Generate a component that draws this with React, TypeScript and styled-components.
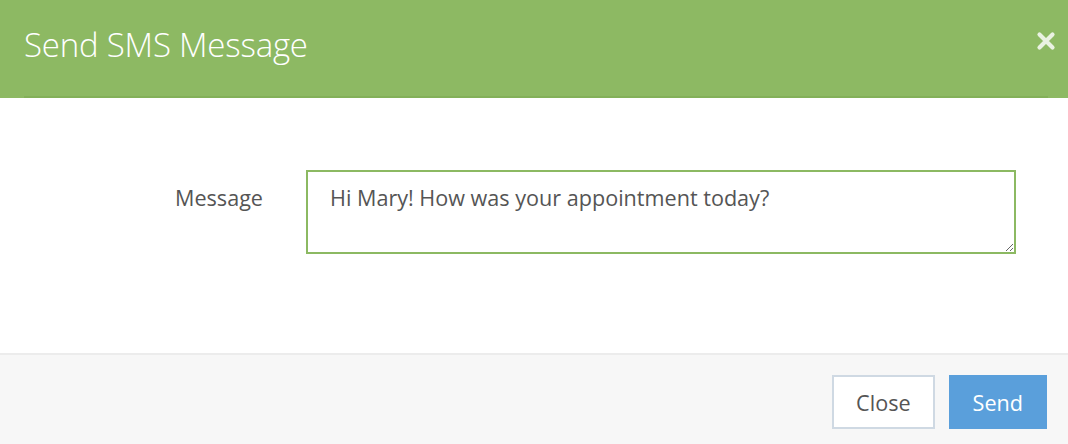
import React, { useEffect, useRef, useState, ChangeEvent } from "react";
import styled, { createGlobalStyle } from "styled-components";

const GlobalStyle = createGlobalStyle`
  html, body {
    margin: 0;
    padding: 0;
    background: #ffffff;
  }
  body {
    font-family: "Open Sans", "Liberation Sans", sans-serif;
    color: #555555;
  }
`;

const Modal = styled.section`
  width: 1068px;
  height: 444px;
  display: flex;
  flex-direction: column;
  background: #ffffff;
`;

const Header = styled.header`
  background: #8db963;
  padding: 0 20px 0 24px;
  height: 98px;
  display: flex;
  box-sizing: border-box;
`;

const HeaderInner = styled.div`
  flex: 1;
  display: flex;
  align-items: center;
  justify-content: space-between;
  border-bottom: 2px solid #83b059;
`;

const Title = styled.h4`
  margin: 0 0 8px;
  font-family: "Open Sans", sans-serif;
  font-weight: 300;
  font-size: 33px;
  color: #ffffff;
  letter-spacing: -0.2px;
`;

const CloseX = styled.button`
  border: none;
  background: none;
  padding: 0;
  margin: 0 -8px 14px 0;
  width: 20px;
  height: 20px;
  cursor: pointer;
  display: flex;
  align-items: center;
  justify-content: center;
`;

const Body = styled.div`
  flex: 1;
  padding: 72px 52px 0 0;
`;

const FormRow = styled.div`
  display: grid;
  grid-template-columns: 263px 1fr;
  column-gap: 43px;
  align-items: start;
`;

const Label = styled.label`
  text-align: right;
  font-size: 21.6px;
  line-height: 28px;
  padding-top: 14px;
  color: #555555;
`;

const MessageInput = styled.textarea`
  box-sizing: border-box;
  height: 84px;
  border: 2px solid #8cb962;
  border-radius: 0;
  padding: 12px 22px 10px;
  font-family: "Open Sans", sans-serif;
  font-size: 21.6px;
  line-height: 28px;
  color: #555555;
  caret-color: #333333;
  outline: none;
  resize: vertical;
`;

const Footer = styled.footer`
  border-top: 2px solid #ececec;
  background: #f7f7f7;
  height: 91px;
  box-sizing: border-box;
  padding: 20px 21px 0 0;
  display: flex;
  justify-content: flex-end;
  align-items: flex-start;
  gap: 14px;
`;

const Button = styled.button<{ $primary?: boolean }>`
  height: 54px;
  box-sizing: border-box;
  padding: 0 22px;
  font-family: "Open Sans", sans-serif;
  font-size: 21.6px;
  border-radius: 0;
  cursor: pointer;
  border: 2px solid ${(p) => (p.$primary ? "#5a9fdb" : "#cfd9e3")};
  background: ${(p) => (p.$primary ? "#5a9fdb" : "#ffffff")};
  color: ${(p) => (p.$primary ? "#ffffff" : "#555555")};
`;

export const App = () => {
  const [message, setMessage] = useState<string>(
    "Hi Mary! How was your appointment today?"
  );
  const inputRef = useRef<HTMLTextAreaElement>(null);

  useEffect(() => {
    const el = inputRef.current;
    if (el) {
      el.focus();
      el.setSelectionRange(el.value.length, el.value.length);
    }
  }, []);

  return (
    <Modal>
      <GlobalStyle />
      <Header>
        <HeaderInner>
          <Title>Send SMS Message</Title>
          <CloseX aria-label="Close">
            <svg width="20" height="20" viewBox="0 0 20 20">
              <path
                d="M3.5 3.5 L16.5 16.5 M16.5 3.5 L3.5 16.5"
                stroke="#eaf2e2"
                strokeWidth="4.2"
                strokeLinecap="round"
              />
            </svg>
          </CloseX>
        </HeaderInner>
      </Header>
      <Body>
        <FormRow>
          <Label htmlFor="sms-message">Message</Label>
          <MessageInput
            id="sms-message"
            ref={inputRef}
            value={message}
            onChange={(event: ChangeEvent<HTMLTextAreaElement>) => {
              setMessage(event.target.value);
            }}
          />
        </FormRow>
      </Body>
      <Footer>
        <Button>Close</Button>
        <Button $primary>Send</Button>
      </Footer>
    </Modal>
  );
};

export default App;
